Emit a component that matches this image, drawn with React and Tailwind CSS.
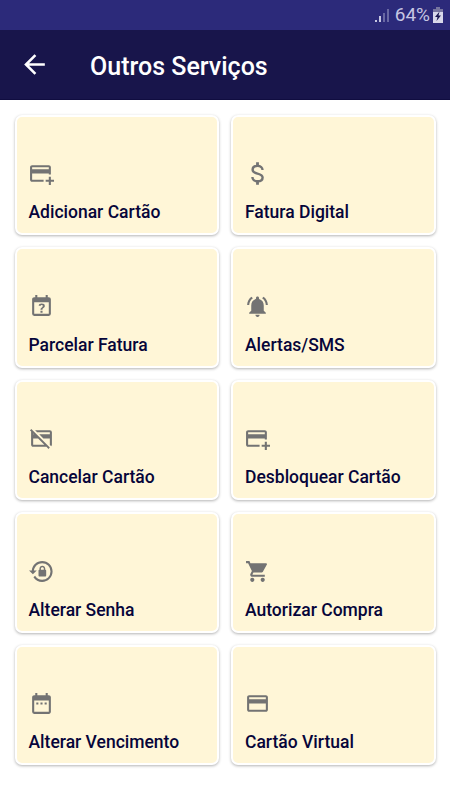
import React from "react";
import {
  MdArrowBack,
  MdDateRange,
  MdNotificationsActive,
  MdOutlineCreditCard,
  MdShoppingCart,
} from "react-icons/md";

const CARD_PLUS =
  "M21 18H24V20H21V23H19V20H16V18H19V15H21V18M19 8V6H3V8H19M19 12H3V18H14V20H3C1.9 20 1 19.1 1 18V6C1 4.9 1.9 4 3 4H19C20.1 4 21 4.9 21 6V13H19V12Z";
const CARD_OFF =
  "M0.93,4.2L2.21,2.93L20,20.72L18.73,22L16.73,20H4C2.89,20 2,19.1 2,18V6C2,5.78 2.04,5.57 2.11,5.38L0.93,4.2M20,8V6H7.82L5.82,4H20A2,2 0 0,1 22,6V18C22,18.6 21.74,19.13 21.32,19.5L19.82,18H20V12H13.82L9.82,8H20M4,8H4.73L4,7.27V8M4,12V18H14.73L8.73,12H4Z";
const CALENDAR_QUESTION =
  "M6,1V3H5C3.89,3 3,3.9 3,5V19A2,2 0 0,0 5,21H19A2,2 0 0,0 21,19V5A2,2 0 0,0 19,3H18V1H16V3H8V1H6M5,8H19V19H5V8M12.19,9C11.32,9 10.62,9.2 10.08,9.59C9.56,10 9.3,10.57 9.31,11.36L9.32,11.39H11.25C11.26,11.09 11.35,10.86 11.53,10.7C11.71,10.55 11.93,10.47 12.19,10.47C12.5,10.47 12.76,10.57 12.94,10.75C13.12,10.94 13.2,11.2 13.2,11.5C13.2,11.82 13.13,12.09 12.97,12.32C12.83,12.55 12.62,12.75 12.36,12.91C11.85,13.25 11.5,13.55 11.31,13.82C11.11,14.08 11,14.5 11,15H13C13,14.69 13.04,14.44 13.13,14.26C13.22,14.08 13.39,13.9 13.64,13.74C14.09,13.5 14.46,13.21 14.75,12.81C15.04,12.41 15.19,12 15.19,11.5C15.19,10.74 14.92,10.13 14.38,9.68C13.85,9.23 13.12,9 12.19,9M11,16V18H13V16H11Z";
const LOCK_RESET =
  "M12.63,2C18.16,2 22.64,6.5 22.64,12C22.64,17.5 18.16,22 12.63,22C9.12,22 6.05,20.18 4.26,17.43L5.84,16.18C7.25,18.47 9.76,20 12.64,20A8,8 0 0,0 20.64,12A8,8 0 0,0 12.64,4C8.56,4 5.2,7.06 4.71,11H7.47L3.73,14.73L0,11H2.69C3.19,5.95 7.45,2 12.63,2M15.59,10.24C16.09,10.25 16.5,10.65 16.5,11.16V15.77C16.5,16.27 16.09,16.69 15.58,16.69H10.05C9.54,16.69 9.13,16.27 9.13,15.77V11.16C9.13,10.65 9.54,10.25 10.04,10.24V9.23C10.04,7.7 11.29,6.46 12.81,6.46C14.34,6.46 15.59,7.7 15.59,9.23V10.24M12.81,7.86C12.06,7.86 11.44,8.47 11.44,9.23V10.24H14.19V9.23C14.19,8.47 13.57,7.86 12.81,7.86Z";

function DollarIcon({ className }) {
  return (
    <svg className={className} viewBox="0 0 24 24" fill="none" stroke="currentColor" strokeWidth="2.3">
      <path d="M16.8 8.6C16.8 6.4 15.1 4.7 12 4.7S7.3 6.3 7.3 8.4C7.3 10.6 8.9 11.3 12 12.1S16.9 13.7 16.9 15.8C16.9 18 15.1 19.4 12.1 19.4C8.9 19.4 7.1 17.9 7.1 15.4" />
      <path d="M12 1.3V4.7M12 19.4V22.7" strokeWidth="2.7" />
    </svg>
  );
}

const services = [
  { label: "Adicionar Cartão", path: CARD_PLUS },
  { label: "Fatura Digital", Icon: DollarIcon },
  { label: "Parcelar Fatura", path: CALENDAR_QUESTION },
  { label: "Alertas/SMS", Icon: MdNotificationsActive },
  { label: "Cancelar Cartão", path: CARD_OFF },
  { label: "Desbloquear Cartão", path: CARD_PLUS },
  { label: "Alterar Senha", path: LOCK_RESET },
  { label: "Autorizar Compra", Icon: MdShoppingCart },
  { label: "Alterar Vencimento", Icon: MdDateRange },
  { label: "Cartão Virtual", Icon: MdOutlineCreditCard },
];

function StatusBar() {
  return (
    <div className="flex h-[30px] items-center justify-end bg-[#2c2a7a] pr-[7px] text-[#c6c6e2]">
      <svg className="mr-[6px] h-[15px] w-[14px]" viewBox="0 0 14 15" fill="currentColor">
        <rect x="0" y="12" width="2" height="2" />
        <rect x="4" y="8" width="2" height="6" />
        <rect x="8" y="5" width="2" height="9" opacity="0.4" />
        <rect x="12" y="1" width="2" height="13" opacity="0.4" />
      </svg>
      <span className="text-[19px] leading-[32px]">64%</span>
      <svg className="ml-[3px] h-[16px] w-[10px]" viewBox="0 0 10 16">
        <path d="M3 0h4v2h3v4H0V2h3z" fill="#77759f" />
        <path d="M0 5h10v11H0z" fill="#d8d8ea" />
        <path d="M6.5 4.5L2 10h2.5L3.5 14 8 8.5H5.5z" fill="#1b1850" />
      </svg>
    </div>
  );
}

function ServiceCard({ label, path, Icon }) {
  return (
    <button className="flex h-[120.5px] flex-col items-start justify-end rounded-[7px] border-[2.5px] border-white bg-[#fff6d7] pb-[9px] pl-[12px] text-left shadow-[0_1px_3px_rgba(0,0,0,0.3)]">
      {Icon ? (
        <Icon className="h-[25px] w-[25px] text-[#737373]" />
      ) : (
        <svg className="h-[25px] w-[25px] text-[#737373]" viewBox="0 0 24 24" fill="currentColor">
          <path d={path} />
        </svg>
      )}
      <span className="mt-[14px] text-[17.5px] leading-[24px] font-medium whitespace-nowrap text-[#06053a]">
        {label}
      </span>
    </button>
  );
}

function App() {
  return (
    <div className="h-[800px] w-[450px] overflow-hidden bg-white font-[Roboto,sans-serif]">
      <StatusBar />
      <header className="flex h-[70px] items-center border-b border-[#100d40] bg-[#18154b] pl-[19px] text-white">
        <MdArrowBack className="h-[31px] w-[31px]" />
        <h1 className="ml-[40px] pt-[4px] text-[25px] font-medium">Outros Serviços</h1>
      </header>
      <main className="grid grid-cols-2 gap-[12px] px-[14.5px] pt-[14.5px]">
        {services.map((service) => (
          <ServiceCard key={service.label} {...service} />
        ))}
      </main>
    </div>
  );
}

export default App;
